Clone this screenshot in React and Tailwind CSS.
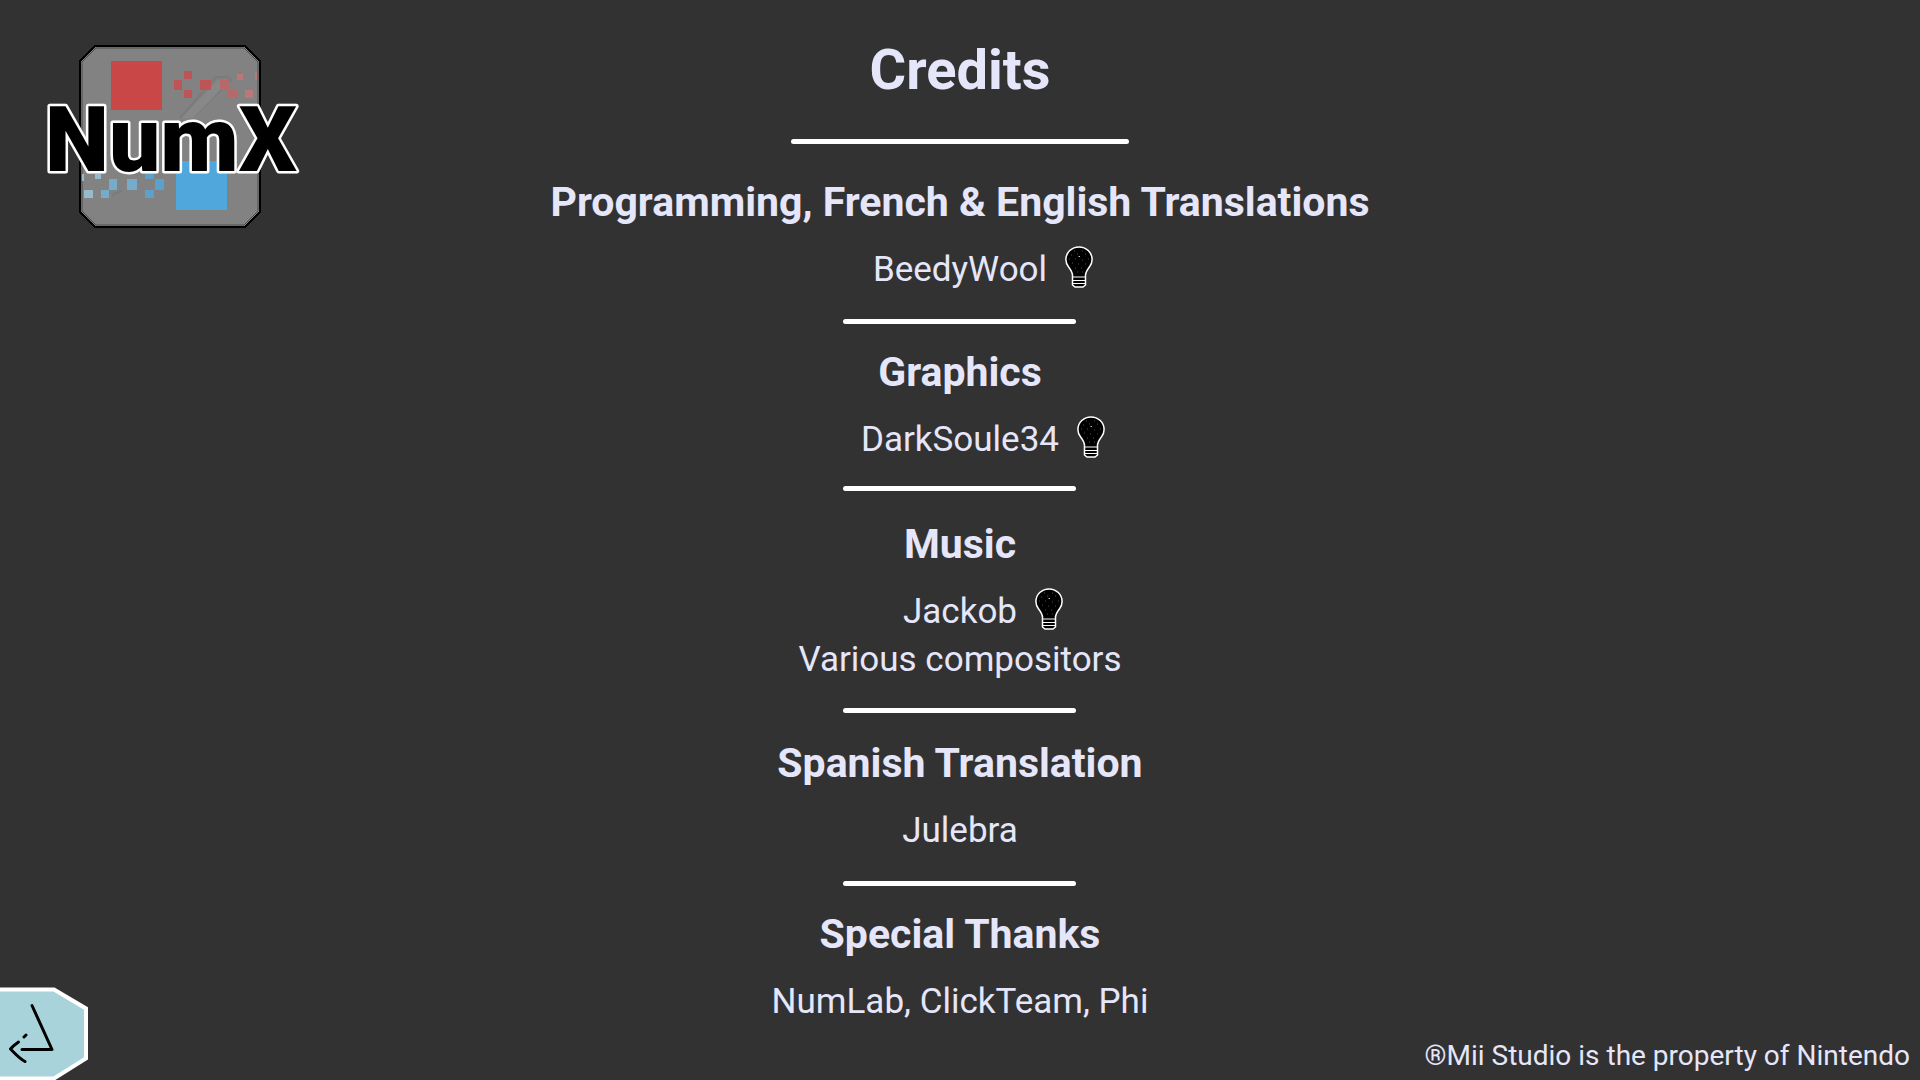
const sections = [
  {
    title: "Programming, French & English Translations",
    names: [{ name: "BeedyWool", bulb: true }],
    heading: "mt-[34px]",
    rule: "mt-[25px]",
  },
  {
    title: "Graphics",
    names: [{ name: "DarkSoule34", bulb: true }],
    heading: "mt-6",
    rule: "mt-[22px]",
  },
  {
    title: "Music",
    names: [{ name: "Jackob", bulb: true }, { name: "Various compositors" }],
    heading: "mt-[29px]",
    rule: "mt-6",
  },
  {
    title: "Spanish Translation",
    names: [{ name: "Julebra" }],
    heading: "mt-[26px]",
    rule: "mt-[26px]",
  },
  {
    title: "Special Thanks",
    names: [{ name: "NumLab, ClickTeam, Phi" }],
    heading: "mt-6",
  },
];

function Bulb() {
  return (
    <svg viewBox="0 0 28 42" className="absolute top-0 left-full ml-[18px] h-[42px] w-7" aria-hidden="true">
      <path
        d="M7.5 29.5C7.5 26 5.5 23.5 3.6 21C1.8 18.8 .9 16.6 .9 13.6C.9 6.3 6.8 .9 14 .9S27.1 6.3 27.1 13.6C27.1 16.6 26.2 18.8 24.4 21C22.5 23.5 20.5 26 20.5 29.5V39L18 41H10L7.5 39Z"
        fill="#000"
        stroke="#fff"
        strokeWidth="1.5"
      />
      <path d="M7.5 31H20.5M7.5 34.5H20.5M8 37.5H20" stroke="#fff" strokeWidth="1.1" />
      <path
        d="M9 5h.8M17 5h.8M6 9h.8M12 8h.8M20 8h.8M4 13h.8M10 13h.8M17 14h.8M23 13h.8M7 17h.8M13 18h.8M20 18h.8M10 22h.8M16 22h.8M12 26h.8M17 26h.8"
        stroke="#777"
        strokeWidth=".8"
      />
      <path d="M13.6 10.5h1.2" stroke="#eee" strokeWidth="1.2" />
    </svg>
  );
}

function Logo() {
  return (
    <svg viewBox="0 0 290 210" className="mt-[30px] ml-[30px] h-[210px] w-[290px]" role="img" aria-label="NumX">
      <path
        d="M65 16H215L230 31V182L215 197H65L50 182V31Z"
        fill="#828282"
        stroke="#000"
        strokeWidth="2"
        shapeRendering="crispEdges"
      />
      <path d="M66 18H214L228 32V181L214 195H66L52 181V32Z" fill="none" stroke="#4c4c4c" strokeWidth="1" />
      <path d="M82 165L92 161M150 88L186 47H198L201 50L163 87" fill="none" stroke="#7b7b7b" strokeWidth="2" />
      <path d="M152 88L188 50L199 51L163 88Z" fill="#888" />
      <path d="M81 31H132V80H81Z" fill="#c94747" />
      <g fill="#bd5557">
        <path d="M154 41h8v8h-8zM144 50h8v10h-8zM154 60h8v8h-8zM170 50h11v10h-11z" />
        <path d="M190 50h9v10h-9zM198 60h9v8h-9z" fill="#b9686a" />
        <path d="M207 44h6v6h-6zM215 60h8v8h-8zM225 42h2v8h-2z" fill="#bc7779" />
      </g>
      <path d="M146 131H197V180H146Z" fill="#50a7dc" />
      <path d="M115 141h9v8h-9zM125 149h9v11h-9zM115 160h9v8h-9z" fill="#5aa1cb" />
      <path d="M97 149h10v11h-10zM79 149h8v11h-8zM71 160h8v8h-8z" fill="#76acca" />
      <path d="M65 144h6v5h-6zM54 160h9v8h-9zM52 144h2v7h-2z" fill="#98bacd" />
      <text
        x="141"
        y="141"
        textAnchor="middle"
        fill="#000"
        stroke="#fff"
        strokeWidth="5"
        strokeLinejoin="round"
        className="text-[91px] font-black [paint-order:stroke]"
      >
        NumX
      </text>
    </svg>
  );
}

function BackButton() {
  return (
    <button type="button" aria-label="Back" className="block h-[93px] w-[88px] cursor-pointer">
      <svg viewBox="0 0 88 93" className="h-full w-full" aria-hidden="true">
        <path d="M-4 2.5H54L86 21.5V71.5L54 91.5H-4Z" fill="#a9d3da" stroke="#fff" strokeWidth="4" />
        <path
          d="M32 18.5L52 62.5H22M18.5 55C15 57.5 12.5 59.5 10.5 62C15 66.5 19.5 71.5 25 74.5M24 50L26 48"
          fill="none"
          stroke="#000"
          strokeWidth="3"
          strokeLinecap="round"
          strokeLinejoin="round"
        />
      </svg>
    </button>
  );
}

export default function App() {
  return (
    <div className="grid min-h-screen grid-cols-[1fr_auto_1fr] bg-[#323232] font-['Roboto',sans-serif] text-[#e6e6fa]">
      <div className="flex flex-col items-start justify-between">
        <Logo />
        <BackButton />
      </div>
      <main className="flex flex-col items-center pt-[38px] text-center">
        <h1 className="text-[56px] leading-[64px] font-bold">Credits</h1>
        <hr className="mt-[37px] h-[5px] w-[338px] rounded-sm border-0 bg-white" />
        {sections.map((s) => (
          <section key={s.title} className="flex flex-col items-center">
            <h2 className={`${s.heading} text-[41px] leading-[48px] font-bold whitespace-nowrap`}>{s.title}</h2>
            <ul className="mt-5 text-[35px] leading-[48px]">
              {s.names.map((n) => (
                <li key={n.name}>
                  <span className="relative inline-block">
                    {n.name}
                    {n.bulb && <Bulb />}
                  </span>
                </li>
              ))}
            </ul>
            {s.rule && <hr className={`${s.rule} h-[5px] w-[233px] rounded-sm border-0 bg-white`} />}
          </section>
        ))}
      </main>
      <p className="self-end justify-self-end pr-[10px] pb-2 text-[28px] leading-8 whitespace-nowrap">
        ®Mii Studio is the property of Nintendo
      </p>
    </div>
  );
}
